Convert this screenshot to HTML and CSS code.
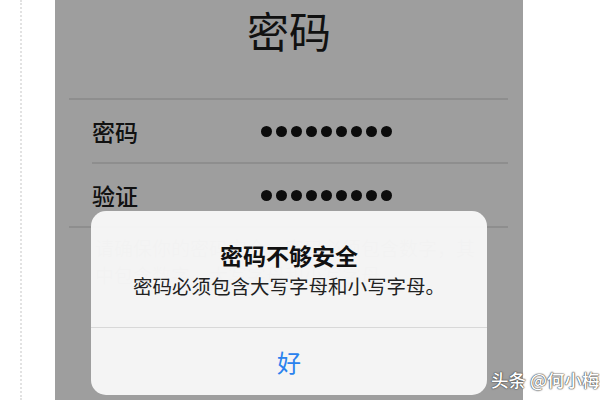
FILE: index.html
```html
<!DOCTYPE html>
<html lang="zh">
<head>
<meta charset="utf-8">
<link rel="stylesheet" href="styles.css">
</head>
<body>
<div class="page">
  <div class="gutter"><div class="dotted"></div></div>
  <div class="panel">
    <div class="title">密码</div>
    <div class="sep sep-wide"></div>
    <div class="row">
      <span class="label">密码</span>
      <span class="dots"><i></i><i></i><i></i><i></i><i></i><i></i><i></i><i></i><i></i></span>
    </div>
    <div class="sep sep-inset"></div>
    <div class="row">
      <span class="label">验证</span>
      <span class="dots"><i></i><i></i><i></i><i></i><i></i><i></i><i></i><i></i><i></i></span>
    </div>
    <div class="sep sep-wide"></div>
    <p class="hint">请确保你的密码安全，密码必须包含数字，其中包含数字、大写字母和小写字母。</p>

    <div class="dialog">
      <div class="dialog-body">
        <div class="dialog-title">密码不够安全</div>
        <div class="dialog-msg">密码必须包含大写字母和小写字母。</div>
      </div>
      <div class="dialog-btn">好</div>
    </div>
  </div>
  <div class="watermark">头条 @何小梅</div>
</div>
</body>
</html>
```

FILE: styles.css
```css
html, body {
  margin: 0;
  padding: 0;
  background: #ffffff;
}
body {
  font-family: "Noto Sans CJK SC", "Noto Sans", sans-serif;
}
.page {
  position: relative;
  width: 600px;
  height: 400px;
  display: flex;
  overflow: hidden;
}
.gutter {
  width: 55px;
  flex: none;
  display: flex;
}
.dotted {
  margin-left: 20px;
  width: 0;
  border-left: 2px dotted #e2e2e2;
  height: 100%;
}
.panel {
  position: relative;
  width: 468px;
  flex: none;
  height: 400px;
  background: #9e9e9e;
  display: flex;
  flex-direction: column;
}
.title {
  height: 98px;
  padding-top: 2px;
  box-sizing: border-box;
  text-align: center;
  font-size: 42px;
  line-height: 56px;
  color: #111;
  font-weight: 400;
  flex: none;
}
.sep {
  height: 2px;
  background: #8e8e8e;
  margin-right: 15px;
  flex: none;
}
.sep-wide { margin-left: 14px; }
.sep-inset { margin-left: 37px; }
.row {
  height: 62px;
  display: flex;
  align-items: center;
  padding-left: 37px;
  flex: none;
}
.label {
  width: 169px;
  font-size: 23px;
  font-weight: 500;
  color: #111;
  line-height: 30px;
}
.dots {
  display: flex;
  gap: 4px;
}
.dots i {
  display: block;
  width: 11px;
  height: 11px;
  border-radius: 50%;
  background: #0c0c0c;
}
.hint {
  margin: 6px 40px 0 40px;
  font-size: 19px;
  line-height: 27px;
  color: #6a6a6a;
}
.dialog {
  position: absolute;
  left: 36px;
  top: 211px;
  width: 396px;
  height: 184px;
  border-radius: 15px;
  background: rgba(247, 247, 247, 0.97);
  display: flex;
  flex-direction: column;
  overflow: hidden;
}
.dialog-body {
  height: 117px;
  border-bottom: 1px solid #d8d8d8;
  display: flex;
  flex-direction: column;
  align-items: center;
  padding-top: 28px;
  box-sizing: border-box;
}
.dialog-title {
  font-size: 23px;
  line-height: 32px;
  font-weight: 700;
  color: #111;
}
.dialog-msg {
  font-size: 19.5px;
  line-height: 26px;
  color: #222;
  margin-top: 2px;
}
.dialog-btn {
  flex: 1;
  display: flex;
  align-items: center;
  justify-content: center;
  font-size: 24px;
  color: #2a82ee;
}
.watermark {
  position: absolute;
  left: 491px;
  top: 368px;
  white-space: nowrap;
  font-size: 17.5px;
  line-height: 24px;
  font-weight: 500;
  color: #ffffff;
  text-shadow: 0 0 1px #444, 0 0 1px #444, 0 0 2px #666;
}
```
